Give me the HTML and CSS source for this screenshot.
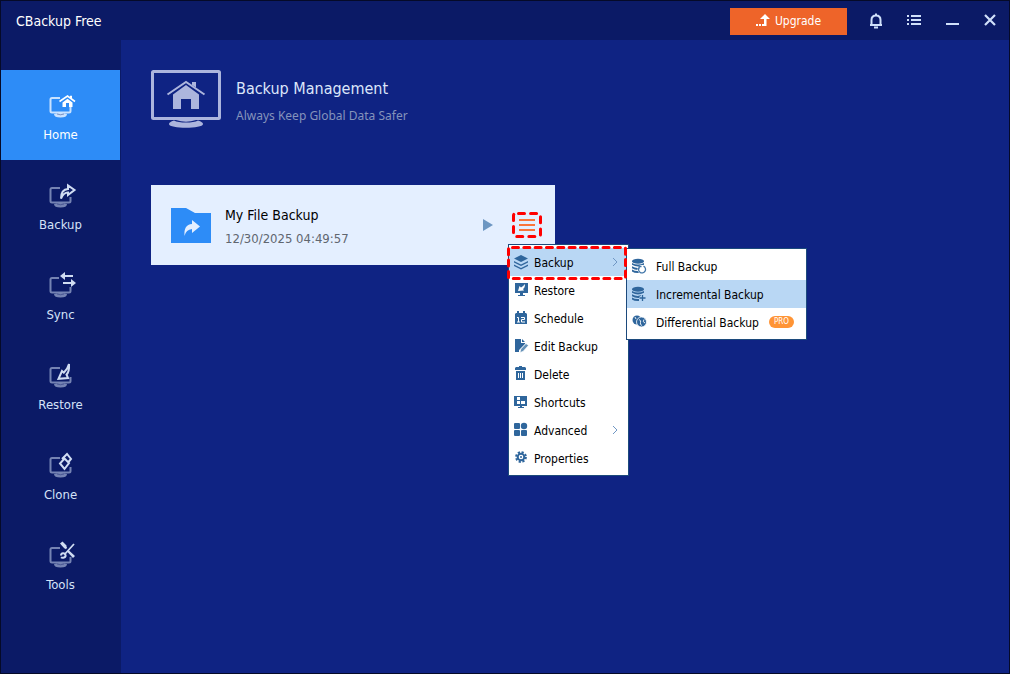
FILE: index.html
```html
<!DOCTYPE html>
<html lang="en">
<head>
<meta charset="utf-8">
<title>CBackup Free</title>
<link rel="stylesheet" href="styles.css">
</head>
<body>
<svg class="defs" aria-hidden="true">
  <symbol id="monitor" viewBox="0 0 23 24">
    <path d="M11 4H3q-1.500 0-1.500 1.500V17q0 1.500 1.500 1.500H20q1.500 0 1.500-1.500V13" fill="none" stroke="currentColor" stroke-width="2"/>
    <path d="M5 20q6.500-2 13 0q0 3.500-6.500 3.500T5 20z" fill="currentColor"/>
    <path d="M8 20q3.500 1.600 7 0" fill="none" stroke="#0b1a66" stroke-opacity=".5" stroke-width=".8"/>
  </symbol>
  <symbol id="database" viewBox="0 0 16 16">
    <ellipse cx="7" cy="3.200" rx="6" ry="2.500"/>
    <path d="M1 5q6 3.200 12 0v1.800q-6 3.200-12 0zM1 8.300q5 2.800 9.500.8L8 12q-4 .3-7-1.700zM1 11.500q3 1.900 7 1.500v2q-4.500.3-7-1.500z"/>
  </symbol>
</svg>
<div class="window">
  <header class="titlebar">
    <span class="app-name">CBackup Free</span>
    <button class="upgrade">
      <svg width="14" height="13" viewBox="0 0 14 13" fill="currentColor"><path d="M9 0l5 5h-3.500v7H6v-2h2V5H4zM0 10h2v2H0zM3 10h2v2H3z"/></svg>
      Upgrade
    </button>
    <button class="tool" aria-label="Notifications">
      <svg width="14" height="16" viewBox="0 0 14 16" fill="none" stroke="currentColor" stroke-width="2"><path d="M1 12h12M2.500 12V7q0-4.500 4.500-4.500T11.500 7v5M7 2.500V.5M5 14.500h4"/></svg>
    </button>
    <button class="tool" aria-label="Menu">
      <svg width="14" height="16" viewBox="0 0 14 16" fill="currentColor"><path d="M0 2h2v2H0zM4 2h10v2H4zM0 6h2v2H0zM4 6h10v2H4zM0 10h2v2H0zM4 10h10v2H4z"/></svg>
    </button>
    <button class="tool" aria-label="Minimize">
      <svg width="14" height="16" viewBox="0 0 14 16" fill="currentColor"><path d="M1 10h13v2H1z"/></svg>
    </button>
    <button class="tool" aria-label="Close">
      <svg width="14" height="16" viewBox="0 0 14 16" fill="none" stroke="currentColor" stroke-width="2.200"><path d="M2 2l10 10M12 2L2 12"/></svg>
    </button>
  </header>
  <div class="body">
    <nav class="sidebar">
      <button class="nav-item active">
        <svg class="nav-icon" width="23" height="24" viewBox="0 0 23 24">
          <use href="#monitor" class="base"/>
          <path d="M10.500 8.500L18.500 2.500l7.500 6" fill="none" stroke="#2d8cf7" stroke-width="4"/>
          <path d="M10.500 7.500L18.500 2l7.500 5.500" fill="none" stroke="#fff" stroke-width="1.600"/>
          <path d="M13.500 8.500l5-3.700 5 3.700V13H20V9h-3v4h-3.500zM21 1.800h2v3h-2z" fill="#fff"/>
        </svg>
        Home
      </button>
      <button class="nav-item">
        <svg class="nav-icon" width="23" height="24" viewBox="0 0 23 24">
          <use href="#monitor" class="base"/>
          <path d="M12 14.500Q12 5.500 19 5V1.500L25.500 6 19 11V8.500Q14.500 8.500 12 14.500z" fill="none" stroke="#d0dcf2" stroke-width="2"/>
        </svg>
        Backup
      </button>
      <button class="nav-item">
        <svg class="nav-icon" width="23" height="24" viewBox="0 0 23 24">
          <use href="#monitor" class="base"/>
          <path d="M10 3h14v5H10z" fill="#0b1a66"/>
          <path d="M11 2L16-2v3h8v2h-8v3zM27 9l-5-4v3h-8v2h8v3z" fill="#d0dcf2"/>
        </svg>
        Sync
      </button>
      <button class="nav-item">
        <svg class="nav-icon" width="23" height="24" viewBox="0 0 23 24">
          <use href="#monitor" class="base"/>
          <path d="M20 0Q20.500 8 17.500 10.500L19 14 9.500 14.800 13 7l1.800 1.700Q18.500 5.500 20 0z" fill="none" stroke="#d0dcf2" stroke-width="2"/>
        </svg>
        Restore
      </button>
      <button class="nav-item">
        <svg class="nav-icon" width="23" height="24" viewBox="0 0 23 24">
          <use href="#monitor" class="base"/>
          <path d="M15.500 4.500l4.500 4.500-4.500 6L11 9.500zM13 5L18 0l4 5-2.500 3" fill="none" stroke="#d0dcf2" stroke-width="2"/>
        </svg>
        Clone
      </button>
      <button class="nav-item">
        <svg class="nav-icon" width="23" height="24" viewBox="0 0 23 24">
          <use href="#monitor" class="base"/>
          <path d="M15.500 10.500L25 0M13 0l4.500 4.500" fill="none" stroke="#d0dcf2" stroke-width="1.800"/>
          <path d="M11-.5l2.500-2 4 4v2.500L15.500 4.500zM18 7.500l2-1 6 5.500-2 2z" fill="#d0dcf2"/>
          <path d="M12 11.500q0-2 2-2.200t2.500 1.700-1.500 2.500-3-.3" fill="none" stroke="#d0dcf2" stroke-width="2"/>
        </svg>
        Tools
      </button>
    </nav>
    <main class="content">
      <section class="heading">
        <svg width="70" height="60" viewBox="0 0 70 60" fill="#acb5dd">
          <rect x="1.500" y="1.500" width="67" height="47" rx="1" fill="none" stroke="#acb5dd" stroke-width="3"/>
          <path d="M16.500 24.500L35 12l18.500 12.500" fill="none" stroke="#acb5dd" stroke-width="2"/>
          <path d="M22 24.500l13-9.500 13 9.500V39h-8V29H30v10h-8zM41 12h4v5.500l-4-2.500z"/>
          <path d="M18 54q0-2 5-3.500 4 2 12 2t12-2q5 1.500 5 3.500c0 5-34 5-34 0z"/>
          <path d="M25 50q10 3.500 20 0z"/>
        </svg>
        <div class="heading-text">
          <h1>Backup Management</h1>
          <p>Always Keep Global Data Safer</p>
        </div>
      </section>
      <article class="task">
        <svg width="40" height="35" viewBox="0 0 40 35"><path d="M0 0h15l9 5h16v30H0z" fill="#2d8cf7"/><path d="M13.500 28Q12.500 16.500 21 16V12l8 6.500-8 6.500v-4Q15 21.500 13.500 28z" fill="#e4efff"/></svg>
        <div class="task-text">
          <h2>My File Backup</h2>
          <p>12/30/2025 04:49:57</p>
        </div>
        <button class="play" aria-label="Run"><svg width="11" height="12" viewBox="0 0 11 12"><path d="M1 0l10 6-10 6z" fill="#6c96c2"/></svg></button>
        <div class="more-wrap">
          <button class="more" aria-label="Task actions">
            <svg width="32" height="28" viewBox="0 0 32 28" fill="none"><path d="M8 9h16M8 14h16M8 19h16" stroke="#f9743a" stroke-width="2"/><rect x="2.500" y="2.500" width="27" height="23" rx="2" stroke="#f00" stroke-width="3" stroke-linecap="round" stroke-dasharray="6 6.080" stroke-dashoffset="-3"/></svg>
          </button>
          <div class="menu main-menu" role="menu">
            <button class="row selected" role="menuitem">
              <svg width="16" height="16" viewBox="0 0 16 16"><path d="M8 1l7 3.500L8 8 1 4.500zM1 7l7 3.500L15 7v1.500L8 12 1 8.500zM1 10.500L8 14l7-3.500V12l-7 3.500L1 12z"/></svg>
              <span>Backup</span>
              <svg class="chevron" width="6" height="10" viewBox="0 0 6 10"><path d="M1 1l4 4-4 4"/></svg>
            </button>
            <button class="row" role="menuitem">
              <svg width="16" height="16" viewBox="0 0 16 16"><path d="M2 1h13v10H2zM7 11h3v2h2v1H5v-1h2z"/><path d="M12 2Q12 6 10 7l1 1.500-6 .5 1.500-5 1.500 1.500Q10 4.500 12 2z" fill="#fff"/></svg>
              <span>Restore</span>
            </button>
            <button class="row" role="menuitem">
              <svg width="16" height="16" viewBox="0 0 16 16"><path d="M3 3h1V1h2v2h4V1h2v2h1l1 1v10H2V4z"/><path d="M4 7.500h1.500V12M4 12h3M8 7.500h3.500v2H8.500V12H12" fill="none" stroke="#fff"/></svg>
              <span>Schedule</span>
            </button>
            <button class="row" role="menuitem">
              <svg width="16" height="16" viewBox="0 0 16 16"><path d="M2 1h6v4h4v1l-6 6v2H2zM9 1l3 3H9z"/><path d="M7 14.500l.8-3.500L13 5.500l2.500 2L10 13.500z" fill="#6692b8" stroke="#fff" stroke-width=".7"/></svg>
              <span>Edit Backup</span>
            </button>
            <button class="row" role="menuitem">
              <svg width="16" height="16" viewBox="0 0 16 16"><path d="M6 1V0h3v1h3l1 1v2H2V2l1-1zM3 5h9v9H3z"/><path d="M5.500 7v5M7.500 7v5M9.500 7v5" stroke="#fff"/></svg>
              <span>Delete</span>
            </button>
            <button class="row" role="menuitem">
              <svg width="16" height="16" viewBox="0 0 16 16"><path d="M1 2h13v10H1zM5 13h6v1H5zM7 12h2v1H7z"/><path d="M4 3h3v3H4zM4 7h3v3H4zM8 7h4v3H8z" fill="#fff"/></svg>
              <span>Shortcuts</span>
            </button>
            <button class="row" role="menuitem">
              <svg width="16" height="16" viewBox="0 0 16 16"><rect x="1" y="1" width="6" height="6" rx="1"/><circle cx="11" cy="4" r="3.200"/><rect x="1" y="8" width="6" height="6" rx="1"/><rect x="8" y="8" width="6" height="6" rx="1"/></svg>
              <span>Advanced</span>
              <svg class="chevron" width="6" height="10" viewBox="0 0 6 10"><path d="M1 1l4 4-4 4"/></svg>
            </button>
            <button class="row" role="menuitem">
              <svg width="16" height="16" viewBox="0 0 16 16"><circle cx="8" cy="7" r="3.300" fill="none" stroke="#2f669c" stroke-width="2"/><circle cx="8" cy="7" r="4.900" fill="none" stroke="#2f669c" stroke-width="2" stroke-dasharray="2.200 1.648"/><circle cx="8" cy="7" r="1"/></svg>
              <span>Properties</span>
            </button>
            <div class="menu sub-menu" role="menu">
              <button class="row" role="menuitem">
                <svg width="16" height="16" viewBox="0 0 16 16"><use href="#database"/><circle cx="11" cy="11.500" r="4.500" fill="#fff"/><path d="M8.500 9a3.500 3.500 0 1 0 4-.8M8 11V8.500h2.500" fill="none" stroke="#4277a9" stroke-width="1.300"/></svg>
                <span>Full Backup</span>
              </button>
              <button class="row selected" role="menuitem">
                <svg width="16" height="16" viewBox="0 0 16 16"><use href="#database"/><path d="M11.500 9v6M8.500 12h6" stroke="#b9d7f4" stroke-width="3"/><path d="M11.500 9v6M8.500 12h6" stroke="#2f669c" stroke-width="1.300"/></svg>
                <span>Incremental Backup</span>
              </button>
              <button class="row" role="menuitem">
                <svg width="16" height="16" viewBox="0 0 16 16"><circle cx="6" cy="6" r="4.500"/><circle cx="10.500" cy="8" r="5" stroke="#fff" stroke-width=".8"/><path d="M4 3l1 2M8 5.500q2.500 1 1.500 3T11 11.500M13 5.500q-2 2.500 1 3.500" fill="none" stroke="#fff" stroke-width=".9"/></svg>
                <span>Differential Backup</span>
                <em class="badge">PRO</em>
              </button>
            </div>
            <svg class="marker" width="120" height="34" viewBox="0 0 120 34" fill="none"><rect x="1.500" y="1.500" width="117" height="31" rx="1" stroke="#f00" stroke-width="3" stroke-linecap="round" stroke-dasharray="6 5.320" stroke-dashoffset="-3"/></svg>
          </div>
        </div>
      </article>
    </main>
  </div>
</div>
</body>
</html>
```
FILE: styles.css
```css
* { box-sizing: border-box; }
body {
  margin: 0;
  font-family: "DejaVu Sans Condensed", "Open Sans", "Noto Sans", sans-serif;
  font-size: 12px;
  line-height: 16px;
}
h1, h2, p { margin: 0; font-weight: 400; }
button {
  margin: 0;
  padding: 0;
  border: 0;
  background: none;
  color: inherit;
  font: inherit;
}
svg { display: block; flex: none; }
.defs { position: absolute; width: 0; height: 0; }
.window {
  display: flex;
  flex-direction: column;
  min-height: 100vh;
  border: 1px solid #050a28;
  background: #0f2383;
}
.titlebar {
  display: flex;
  align-items: center;
  height: 39px;
  padding-left: 15px;
  background: #0b1a66;
  color: #d0e0fa;
}
.app-name { margin-right: auto; color: #fff; font-size: 14px; }
.upgrade {
  display: flex;
  align-items: center;
  justify-content: center;
  gap: 5px;
  width: 117px;
  height: 27px;
  margin: 2px 10px 0 0;
  padding-bottom: 2px;
  background: #ee6429;
  color: #fff;
}
.tool { display: flex; justify-content: center; width: 38px; }
.body { display: flex; flex: 1; }
.sidebar {
  width: 120px;
  flex: none;
  padding: 30px 1px 0 0;
  background: #0b1a66;
}
.nav-item {
  display: flex;
  flex-direction: column;
  align-items: center;
  gap: 9px;
  width: 100%;
  height: 90px;
  padding-top: 24px;
  color: #d5e2f8;
  font-size: 13px;
}
.nav-item.active { background: #2d8cf7; color: #fff; }
.nav-icon { overflow: visible; }
.base { color: #7583b3; }
.active .base { color: #c9e2ff; }
.content { flex: 1; padding: 30px; }
.heading { display: flex; gap: 15px; }
.heading-text { padding-top: 9px; }
.heading h1 { font-size: 16px; line-height: 20px; color: #dce6fa; }
.heading p { margin-top: 9px; color: #8593bb; font-family: "Noto Sans", "Open Sans", sans-serif; }
.task {
  display: flex;
  align-items: center;
  width: 404px;
  height: 80px;
  margin-top: 55px;
  padding: 0 12px 0 20px;
  background: #e4efff;
}
.task-text { flex: 1; padding: 2px 0 0 14px; }
.task h2 { font-size: 14px; line-height: 20px; color: #000; }
.task p { margin-top: 6px; color: #60666f; font-size: 13px; }
.play { margin-right: 18px; }
.more-wrap { position: relative; }
.more { display: block; }
.menu {
  position: absolute;
  z-index: 1;
  padding: 3px 0;
  border: 1px solid #1c4a7c;
  background: #fff;
  color: #000;
}
.main-menu { top: 33px; left: -3px; width: 121px; }
.sub-menu { top: 3px; left: 117px; width: 181px; }
.row {
  display: flex;
  align-items: center;
  width: 100%;
  height: 28px;
  padding: 0 10px 0 4px;
  text-align: left;
  white-space: nowrap;
  fill: #2f669c;
}
.row span { flex: 1; padding: 2px 0 0 5px; }
.sub-menu .row { padding-right: 12px; }
.sub-menu .row span { padding-left: 9px; }
.selected { background: #b9d7f4; }
.chevron { fill: none; stroke: #7097c4; }
.marker { position: absolute; top: 1px; left: -2px; z-index: 2; pointer-events: none; }
.badge {
  padding: 0 5px;
  border-radius: 6px;
  background: #ff9435;
  color: #fff;
  font-size: 8px;
  font-style: normal;
  line-height: 12px;
}
```
